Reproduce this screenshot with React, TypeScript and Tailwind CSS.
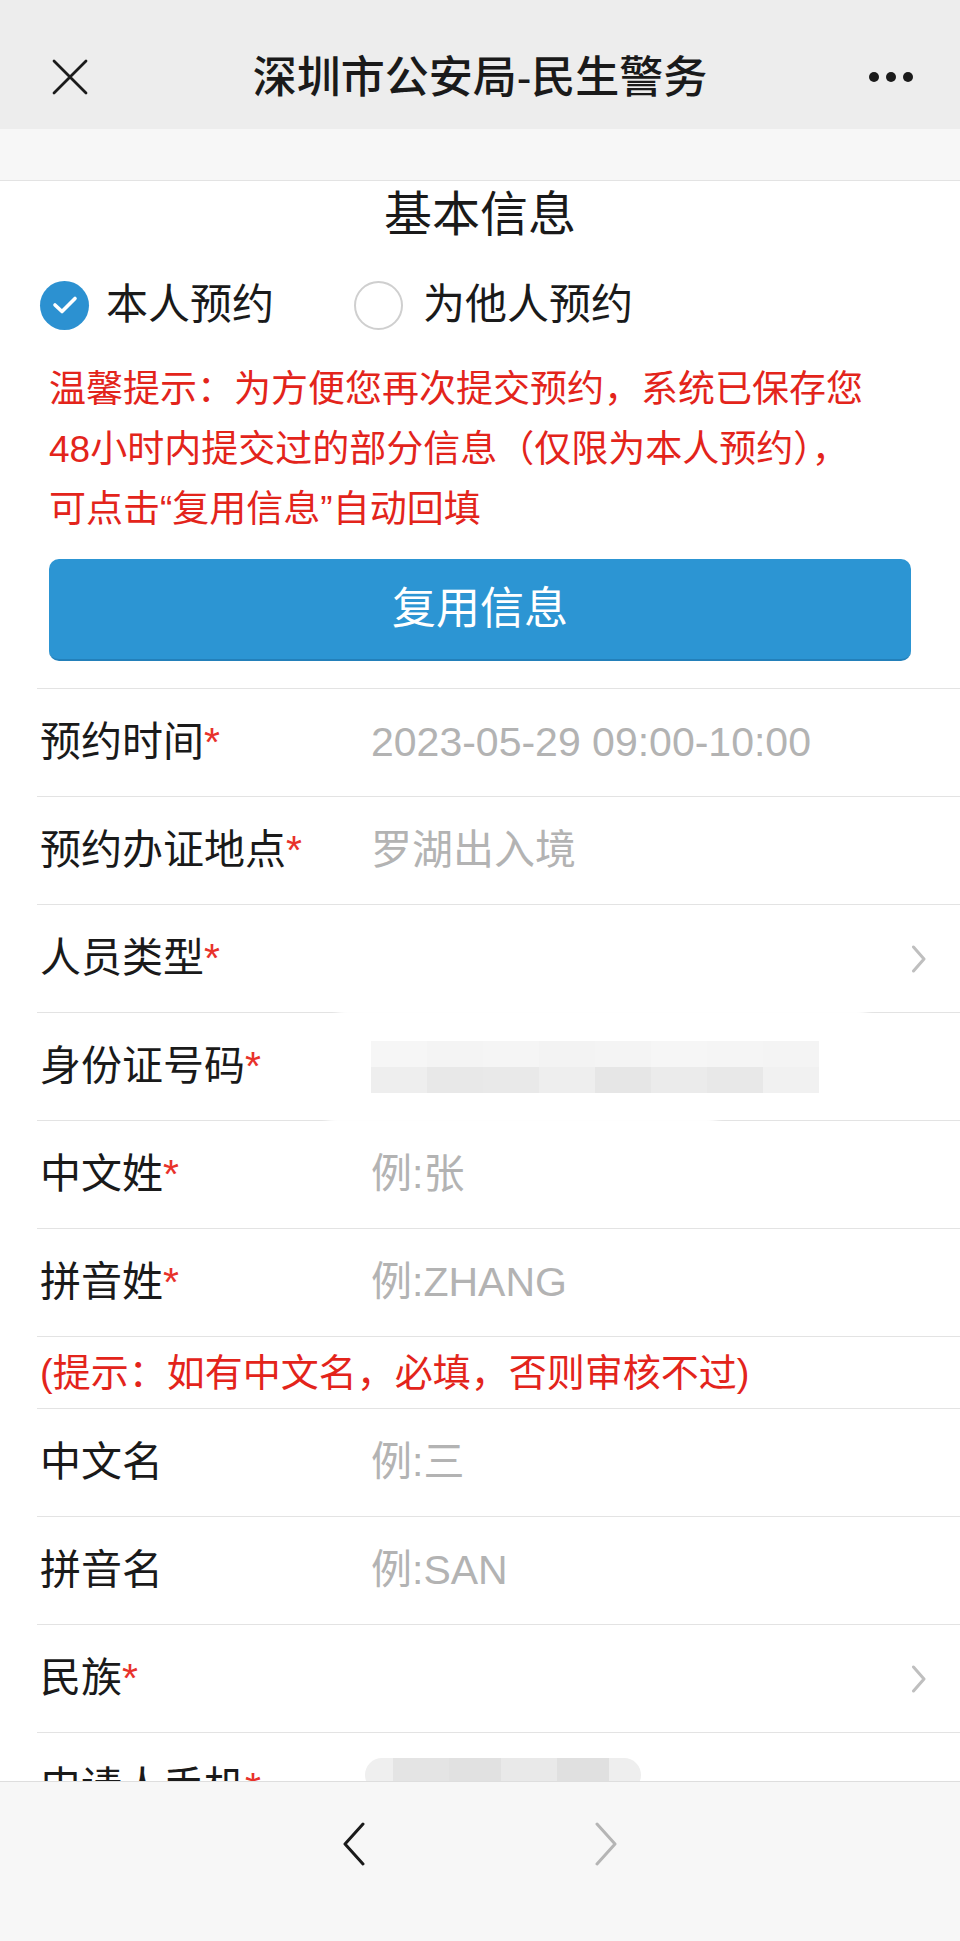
import type { ReactNode } from "react";

const FONT = "font-['Liberation_Sans','Noto_Sans_CJK_SC',sans-serif]";

function Chevron({ className }: { className?: string }) {
  return (
    <svg width="16" height="28" viewBox="0 0 16 28" fill="none" className={className}>
      <path d="M2.5 2 L13 14 L2.5 26" stroke="currentColor" strokeWidth="3" strokeLinecap="round" strokeLinejoin="round" />
    </svg>
  );
}

function Req() {
  return <span className="text-[#e8322b]">*</span>;
}

interface RowProps {
  label: string;
  required?: boolean;
  value?: ReactNode;
  arrow?: boolean;
  children?: ReactNode;
}

function Row({ label, required, value, arrow, children }: RowProps) {
  return (
    <div className="relative flex h-[108px] shrink-0 items-center border-b border-[#e3e3e3] pr-[33px]">
      <div className="w-[334px] shrink-0 pl-[3px] text-[41px] leading-none text-[#1a1a1a]">
        {label}
        {required && <Req />}
      </div>
      <div className="flex-1 text-[41px] leading-none text-[#b3b3b3]">{value}</div>
      {arrow && <Chevron className="text-[#bfbfbf]" />}
      {children}
    </div>
  );
}

function IdBlur() {
  const top = ["#f6f6f6", "#f4f4f4", "#f5f5f5", "#f3f3f3", "#f4f4f4", "#f6f6f6", "#f5f5f5", "#f4f4f4"];
  const bottom = ["#eeeeee", "#e8e8e8", "#e9e9e9", "#eeeeee", "#e6e6e6", "#ebebeb", "#e8e8e8", "#f1f1f1"];
  return (
    <div className="flex h-[52px] w-[448px] flex-col">
      <div className="flex h-1/2">
        {top.map((c, i) => (
          <div key={i} className="flex-1" style={{ background: c }} />
        ))}
      </div>
      <div className="flex h-1/2">
        {bottom.map((c, i) => (
          <div key={i} className="flex-1" style={{ background: c }} />
        ))}
      </div>
    </div>
  );
}

export default function App() {
  return (
    <div className={`flex h-[1941px] w-[960px] flex-col overflow-hidden bg-white ${FONT}`}>
      {/* nav */}
      <div className="relative flex h-[129px] shrink-0 items-center justify-center bg-[#ededed] pt-[26px]">
        <svg width="36" height="36" viewBox="0 0 36 36" className="absolute left-[52px] top-[59px]">
          <path d="M2 2 L34 34 M34 2 L2 34" stroke="#1b1b1b" strokeWidth="2.8" strokeLinecap="round" />
        </svg>
        <div className="text-[44px] font-medium leading-none text-[#1a1a1a]">深圳市公安局-民生警务</div>
        <div className="absolute right-[47px] top-[72px] flex gap-[7px]">
          <span className="h-[10px] w-[10px] rounded-full bg-[#1b1b1b]" />
          <span className="h-[10px] w-[10px] rounded-full bg-[#1b1b1b]" />
          <span className="h-[10px] w-[10px] rounded-full bg-[#1b1b1b]" />
        </div>
      </div>
      <div className="h-[52px] shrink-0 border-b border-[#e3e3e3] bg-[#f7f7f7]" />

      {/* content */}
      <div className="flex min-h-0 flex-1 flex-col overflow-hidden">
        <div className="flex h-[68px] shrink-0 items-center justify-center text-[48px] leading-none text-[#1a1a1a]">
          基本信息
        </div>

        <div className="mt-[16px] flex h-[80px] shrink-0 items-center pl-[40px] text-[42px] leading-none text-[#1a1a1a]">
          <span className="flex h-[49px] w-[49px] items-center justify-center rounded-full bg-[#2c91d1]">
            <svg width="26" height="20" viewBox="0 0 26 20" fill="none">
              <path d="M3 10 L10 16.5 L23 3.5" stroke="white" strokeWidth="3.6" strokeLinecap="round" strokeLinejoin="round" />
            </svg>
          </span>
          <span className="ml-[17px]">本人预约</span>
          <span className="ml-[80px] h-[49px] w-[49px] rounded-full border-2 border-[#cfcfcf] bg-white" />
          <span className="ml-[20px]">为他人预约</span>
        </div>

        <div className="mt-[15px] shrink-0 whitespace-nowrap pl-[49px] text-[37px] leading-[60px] text-[#e3241b]">
          温馨提示：为方便您再次提交预约，系统已保存您
          <br />
          48小时内提交过的部分信息（仅限为本人预约），
          <br />
          可点击“复用信息”自动回填
        </div>

        <button className="mx-[49px] mt-[19px] flex h-[102px] shrink-0 items-center justify-center rounded-[10px] border-b-2 border-[#2380ba] bg-[#2c95d3] text-[44px] leading-none text-white">
          复用信息
        </button>

        <div className="ml-[37px] mt-[27px] flex shrink-0 flex-col border-t border-[#e3e3e3]">
          <Row label="预约时间" required value="2023-05-29 09:00-10:00" />
          <Row label="预约办证地点" required value="罗湖出入境" />
          <Row label="人员类型" required arrow />
          <Row label="身份证号码" required value={<IdBlur />}>
            <div className="pointer-events-none absolute left-[300px] top-[-8px] h-[18px] w-[530px] rounded-full bg-white blur-[4px]" />
            <div className="pointer-events-none absolute bottom-[-8px] left-[290px] h-[18px] w-[390px] rounded-full bg-white blur-[4px]" />
          </Row>
          <Row label="中文姓" required value="例:张" />
          <Row label="拼音姓" required value="例:ZHANG" />
          <div className="flex h-[72px] shrink-0 items-center border-b border-[#e3e3e3] pl-[3px] text-[38px] leading-none text-[#e3241b]">
            (提示：如有中文名，必填，否则审核不过)
          </div>
          <Row label="中文名" value="例:三" />
          <Row label="拼音名" value="例:SAN" />
          <Row label="民族" required arrow />
          <div className="relative flex h-[108px] shrink-0 items-center pl-[3px] text-[41px] leading-none text-[#1a1a1a]">
            申请人手机
            <Req />
            <div className="absolute left-[328px] top-[25px] flex h-[34px] w-[276px] overflow-hidden rounded-full">
              <div className="w-[28px] bg-[#efefef]" />
              <div className="w-[56px] bg-[#e4e4e4]" />
              <div className="w-[52px] bg-[#e1e1e1]" />
              <div className="w-[56px] bg-[#e9e9e9]" />
              <div className="w-[52px] bg-[#e0e0e0]" />
              <div className="flex-1 bg-[#eeeeee]" />
            </div>
          </div>
        </div>
      </div>

      {/* bottom toolbar */}
      <div className="flex h-[160px] shrink-0 items-start justify-center gap-[226px] border-t border-[#dedede] bg-[#f7f7f7] pt-[40px]">
        <svg width="26" height="44" viewBox="0 0 26 44" fill="none">
          <path d="M22 2 L4 22 L22 42" stroke="#1b1b1b" strokeWidth="3" strokeLinecap="round" strokeLinejoin="round" />
        </svg>
        <svg width="26" height="44" viewBox="0 0 26 44" fill="none">
          <path d="M4 2 L22 22 L4 42" stroke="#b5b5b5" strokeWidth="3" strokeLinecap="round" strokeLinejoin="round" />
        </svg>
      </div>
    </div>
  );
}
